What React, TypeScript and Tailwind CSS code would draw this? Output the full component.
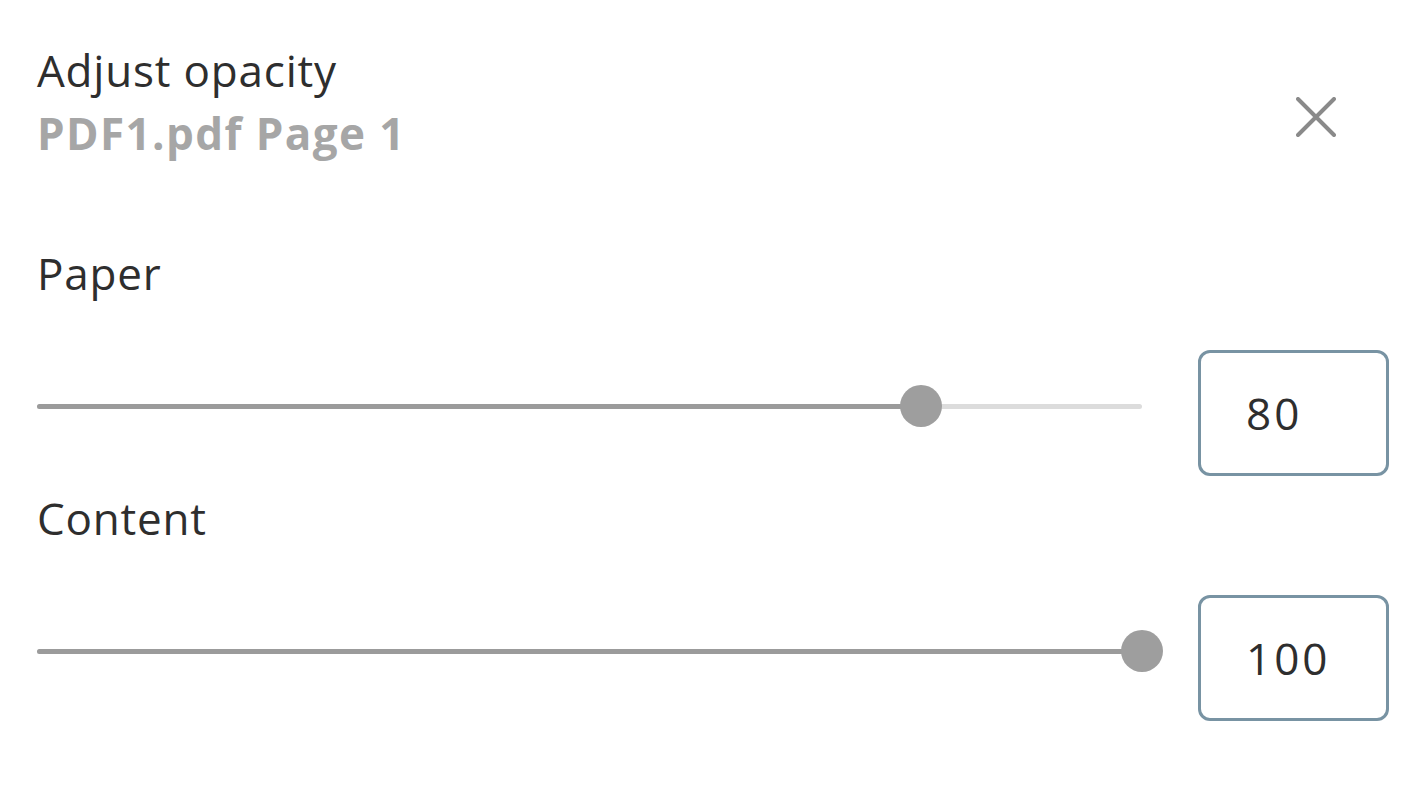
import React from "react"

interface SliderProps {
  value: number
}

function OpacitySlider({ value }: SliderProps) {
  return (
    <div className="flex items-center gap-[56px]">
      <div className="relative h-[42px] flex-1 mb-[14px]">
        <div className="absolute left-0 right-0 top-[19px] h-[5px] rounded-full bg-[#dcdcdc]" />
        <div
          className="absolute left-0 top-[19px] h-[5px] rounded-full bg-[#9b9b9b]"
          style={{ width: `${value}%` }}
        />
        <div
          className="absolute top-0 h-[42px] w-[42px] -translate-x-1/2 rounded-full bg-[#9e9e9e]"
          style={{ left: `${value}%` }}
        />
      </div>
      <div className="flex h-[126px] w-[191px] items-center rounded-[12px] border-[3px] border-[#7893a3] pl-[45px] text-[44px] tracking-[3px] text-[#2e2e2e]">
        {value}
      </div>
    </div>
  )
}

export default function App() {
  return (
    <div
      className="h-[796px] w-[1422px] bg-white pl-[37px] pr-[33px] pt-[39px] text-[44px] leading-[63px] tracking-[0.8px] text-[#2e2e2e]"
      style={{ fontFamily: "'Open Sans', 'Noto Sans', sans-serif" }}
    >
      <div className="flex items-start justify-between pr-[53px]">
        <div>
          <div>Adjust opacity</div>
          <div className="font-bold tracking-[1.4px] text-[#a6a6a6]">PDF1.pdf Page 1</div>
        </div>
        <svg
          className="mt-[58px]"
          width="40"
          height="40"
          viewBox="0 0 40 40"
          fill="none"
          stroke="#8a8a8a"
          strokeWidth="4"
          strokeLinecap="round"
        >
          <path d="M2 2 L38 38 M38 2 L2 38" />
        </svg>
      </div>

      <div className="mt-[77px]">Paper</div>
      <div className="mt-[45px]">
        <OpacitySlider value={80} />
      </div>

      <div className="mt-[11px]">Content</div>
      <div className="mt-[45px]">
        <OpacitySlider value={100} />
      </div>
    </div>
  )
}
